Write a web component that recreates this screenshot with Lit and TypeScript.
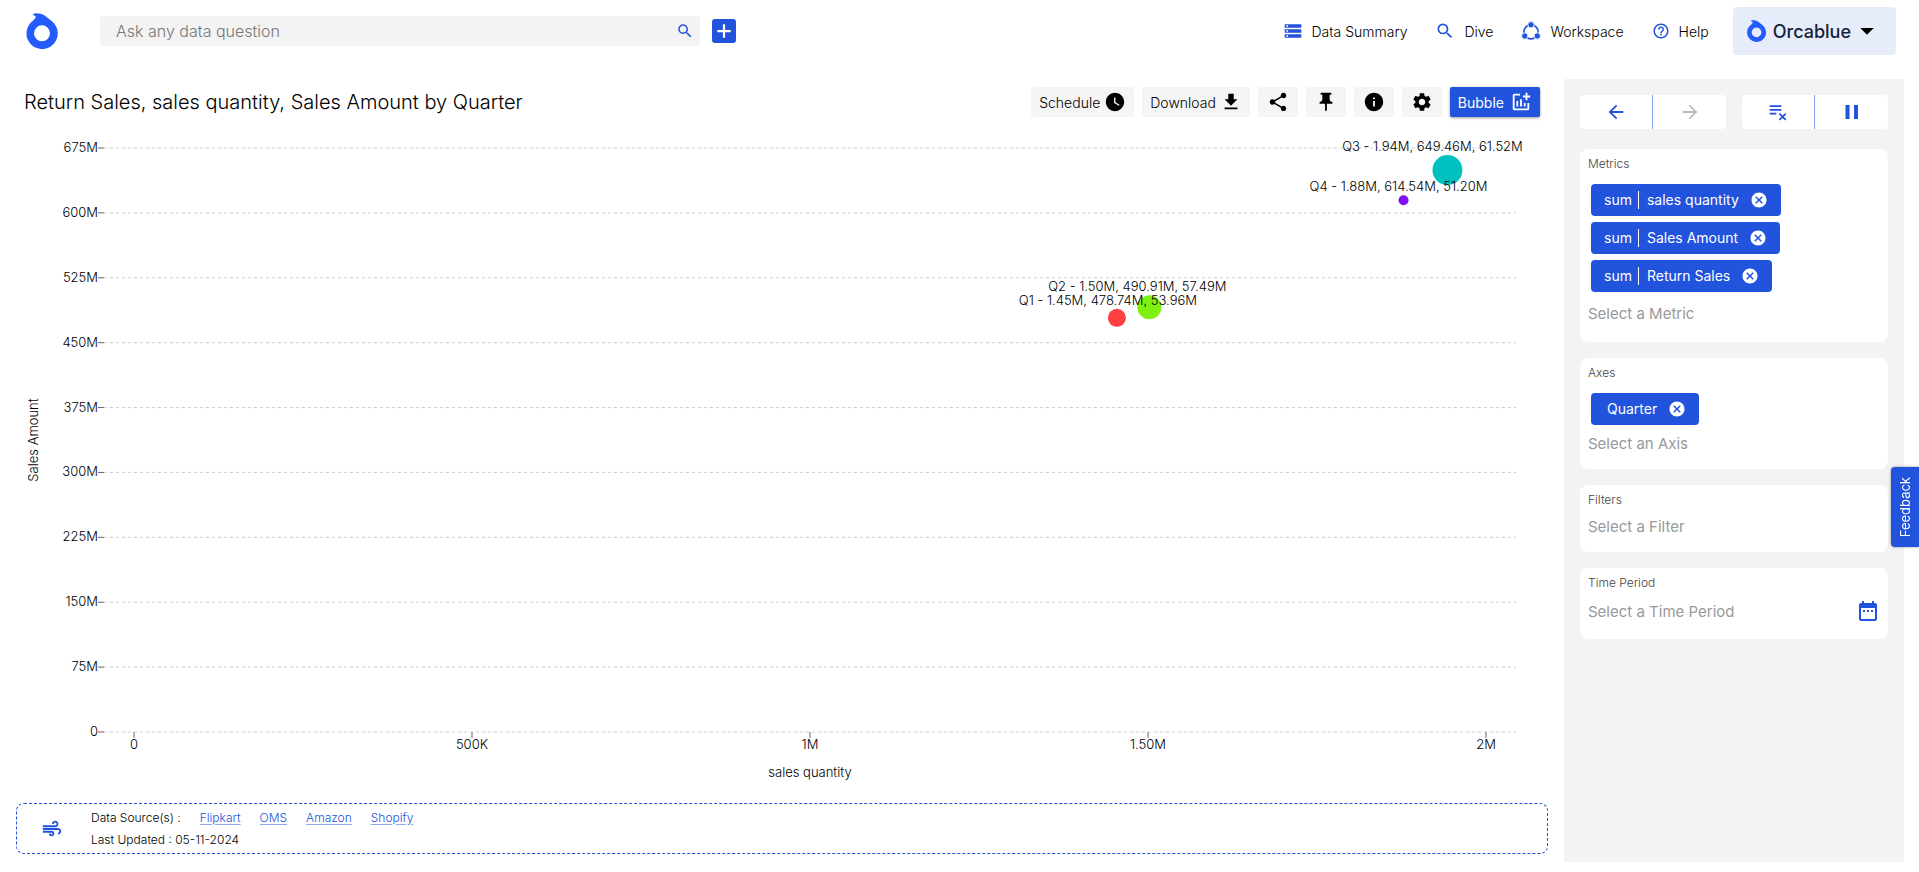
import { LitElement, html, svg, css, nothing } from "lit";
import { customElement, property, state } from "lit/decorators.js";

const ICONS: Record<string, string> = {
  search:
    "M15.5 14h-.79l-.28-.27A6.471 6.471 0 0 0 16 9.5 6.5 6.5 0 1 0 9.5 16c1.61 0 3.09-.59 4.23-1.57l.27.28v.79l5 4.99L20.49 19l-4.99-5zm-6 0C7.01 14 5 11.99 5 9.5S7.01 5 9.5 5 14 7.01 14 9.5 11.99 14 9.5 14z",
  plus: "M21 13.5h-7.5V21h-3v-7.5H3v-3h7.5V3h3v7.500H21z",
  storage:
    "M2 20h20v-4H2v4zm2-3h2v2H4v-2zM2 4v4h20V4H2zm4 3H4V5h2v2zm-4 7h20v-4H2v4zm2-3h2v2H4v-2z",
  help: "M11 18h2v-2h-2v2zm1-16C6.480 2 2 6.480 2 12s4.480 10 10 10 10-4.480 10-10S17.520 2 12 2zm0 18c-4.410 0-8-3.590-8-8s3.590-8 8-8 8 3.590 8 8-3.590 8-8 8zm0-14c-2.210 0-4 1.790-4 4h2c0-1.100.9-2 2-2s2 .9 2 2c0 2-3 1.750-3 5h2c0-2.250 3-2.500 3-5 0-2.210-1.790-4-4-4z",
  clock:
    "M12 2C6.5 2 2 6.5 2 12s4.5 10 10 10 10-4.5 10-10S17.5 2 12 2zm4.200 14.200L11 13V7h1.500v5.200l4.500 2.700-.8 1.300z",
  download: "M19 9h-4V3H9v6H5l7 7 7-7zM5 18v2h14v-2H5z",
  share:
    "M18 16.080c-.76 0-1.440.3-1.960.77L8.910 12.700c.05-.23.09-.46.09-.7s-.04-.47-.09-.7l7.050-4.110c.54.5 1.250.81 2.040.81 1.660 0 3-1.340 3-3s-1.340-3-3-3-3 1.340-3 3c0 .24.04.47.09.7L8.040 9.810C7.500 9.310 6.790 9 6 9c-1.660 0-3 1.340-3 3s1.340 3 3 3c.79 0 1.500-.31 2.040-.81l7.120 4.160c-.05.21-.08.43-.08.65 0 1.610 1.310 2.920 2.920 2.920s2.920-1.310 2.920-2.920-1.310-2.920-2.920-2.920z",
  pin: "M16 9V4h1c.55 0 1-.45 1-1s-.45-1-1-1H7c-.55 0-1 .45-1 1s.45 1 1 1h1v5c0 1.660-1.340 3-3 3v2h5.970v7l1 1 1-1v-7H19v-2c-1.660 0-3-1.340-3-3z",
  info: "M12 2C6.480 2 2 6.480 2 12s4.480 10 10 10 10-4.480 10-10S17.520 2 12 2zm1 15h-2v-6h2v6zm0-8h-2V7h2v2z",
  settings:
    "M19.14 12.94c.04-.3.06-.61.06-.94 0-.32-.02-.64-.07-.94l2.03-1.58a.49.49 0 0 0 .12-.61l-1.92-3.32a.488.488 0 0 0-.59-.22l-2.39.96c-.5-.38-1.03-.7-1.62-.94l-.36-2.54a.484.484 0 0 0-.48-.41h-3.84c-.24 0-.43.17-.47.41l-.36 2.54c-.59.24-1.13.57-1.62.94l-2.39-.96c-.22-.08-.47 0-.59.22L2.74 8.87c-.12.21-.08.47.12.61l2.03 1.58c-.05.3-.09.63-.09.94s.02.64.07.94l-2.03 1.58a.49.49 0 0 0-.12.61l1.92 3.32c.12.22.37.29.59.22l2.39-.96c.5.38 1.03.7 1.62.94l.36 2.54c.05.24.24.41.48.41h3.84c.24 0 .44-.17.47-.41l.36-2.54c.59-.24 1.13-.56 1.62-.94l2.39.96c.22.08.47 0 .59-.22l1.92-3.32c.12-.22.07-.47-.12-.61l-2.01-1.58zM12 15.6c-1.98 0-3.6-1.62-3.6-3.6s1.62-3.6 3.6-3.6 3.6 1.62 3.6 3.6-1.62 3.6-3.6 3.6z",
  addchart:
    "M22 5v2h-3v3h-2V7h-3V5h3V2h2v3h3zm-3 14H5V5h6V3H5c-1.100 0-2 .9-2 2v14c0 1.100.9 2 2 2h14c1.100 0 2-.9 2-2v-6h-2v6zm-4-6v4h2v-4h-2zm-4 4h2V9h-2v8zm-2 0v-6H7v6h2z",
  back: "M20 11H7.830l5.590-5.590L12 4l-8 8 8 8 1.410-1.410L7.830 13H20v-2z",
  forward: "M12 4l-1.410 1.410L16.170 11H4v2h12.170l-5.580 5.590L12 20l8-8z",
  clear:
    "M2 4h14v2H2zM2 8.500h14v2H2zM2 13h8v2H2zM14.400 13.200l3.100 3.100 3.100-3.100 1.400 1.400-3.100 3.100 3.100 3.100-1.400 1.400-3.100-3.100-3.100 3.100-1.400-1.400 3.100-3.100-3.100-3.100z",
  pause: "M5.500 19h4V5h-4v14zm8.500-14v14h4V5h-4z",
  cancel:
    "M12 2C6.470 2 2 6.470 2 12s4.470 10 10 10 10-4.470 10-10S17.530 2 12 2zm5 13.590L15.590 17 12 13.410 8.410 17 7 15.590 10.590 12 7 8.410 8.410 7 12 10.590 15.590 7 17 8.410 13.410 12 17 15.590z",
  calendar:
    "M19 4h-1V2h-2v2H8V2H6v2H5c-1.110 0-1.990.9-1.990 2L3 20a2 2 0 0 0 2 2h14c1.100 0 2-.9 2-2V6c0-1.100-.9-2-2-2zm0 16H5V9h14v11zM7 11h2v2H7zM11 11h2v2h-2zM15 11h2v2h-2z",
  air: "M14.500 17c0 1.650-1.350 3-3 3s-3-1.350-3-3h2c0 .55.45 1 1 1s1-.45 1-1-.45-1-1-1H2v-2h9.500c1.650 0 3 1.350 3 3zM19 6.500C19 4.570 17.430 3 15.500 3S12 4.570 12 6.500h2c0-.83.67-1.500 1.500-1.500s1.500.67 1.500 1.500S16.330 8 15.500 8H2v2h13.500c1.930 0 3.500-1.570 3.500-3.500zm-.5 4.500H2v2h16.500c.83 0 1.500.67 1.500 1.500s-.67 1.500-1.500 1.500v2c1.930 0 3.500-1.570 3.500-3.500S20.430 11 18.500 11z",
  caret: "M3 8h18l-9 9z",
};

const icon = (name: string, size = 20) => html`
  <svg viewBox="0 0 24 24" width=${size} height=${size} fill="currentColor" aria-hidden="true">
    <path d=${ICONS[name]}></path>
  </svg>
`;

const workspaceIcon = html`
  <svg viewBox="0 0 24 24" width="20" height="20" fill="currentColor" aria-hidden="true">
    <circle cx="12" cy="13" r="8.500" fill="none" stroke="currentColor" stroke-width="2"></circle>
    <g stroke="#fff" stroke-width="1">
      <circle cx="12" cy="4.500" r="3.800"></circle>
      <circle cx="4.500" cy="18" r="3.800"></circle>
      <circle cx="19.500" cy="18" r="3.800"></circle>
    </g>
  </svg>
`;

const orcaLogo = (width: number, height: number) => html`
  <svg viewBox="0 0 94 108" width=${width} height=${height} aria-hidden="true">
    <path
      fill="#235bff"
      fill-rule="evenodd"
      d="M19 3C28-1 43 0 54 7L76 24A47 47 0 1 1 15 27C24 20 31 13 27 9C24 6 20 8 19 3ZM47 37A24 24 0 1 0 47 85A24 24 0 1 0 47 37Z"
    ></path>
  </svg>
`;

const BASE = css`
  :host {
    box-sizing: border-box;
    font-family: Inter, "Open Sans", sans-serif;
  }
  * {
    box-sizing: border-box;
  }
  svg {
    display: block;
    flex: none;
  }
  button,
  input {
    font: inherit;
    color: inherit;
    border: 0;
    padding: 0;
    background: none;
  }
  button {
    cursor: pointer;
  }
  input {
    outline: none;
  }
`;

interface Bubble {
  name: string;
  quantity: number;
  amount: number;
  label: string;
  radius: number;
  color: string;
}

const BUBBLES: Bubble[] = [
  { name: "Q1", quantity: 1.454, amount: 478.74, label: "Q1 - 1.45M, 478.74M, 53.96M", radius: 9, color: "#ff4040" },
  { name: "Q2", quantity: 1.502, amount: 490.91, label: "Q2 - 1.50M, 490.91M, 57.49M", radius: 12, color: "#80f010" },
  { name: "Q3", quantity: 1.943, amount: 649.46, label: "Q3 - 1.94M, 649.46M, 61.52M", radius: 15, color: "#00c0c0" },
  { name: "Q4", quantity: 1.878, amount: 614.54, label: "Q4 - 1.88M, 614.54M, 51.20M", radius: 5, color: "#8010f0" },
];

const X_TICKS = [
  { value: 0, label: "0" },
  { value: 0.5, label: "500K" },
  { value: 1, label: "1M" },
  { value: 1.5, label: "1.50M" },
  { value: 2, label: "2M" },
];
const Y_TICKS = [0, 75, 150, 225, 300, 375, 450, 525, 600, 675];

@customElement("bubble-chart")
class BubbleChart extends LitElement {
  static styles = [
    BASE,
    css`
      :host {
        display: block;
        position: relative;
        overflow: hidden;
      }
      .plot {
        position: absolute;
        inset: 0;
        width: 100%;
        height: 100%;
      }
      .plot text {
        font-size: 13px;
        font-weight: 300;
        fill: #000;
      }
      .grid {
        stroke: #ccc;
        stroke-dasharray: 3 3;
      }
      .tick {
        stroke: #666;
      }
    `,
  ];

  @state() private w = 0;
  @state() private h = 0;
  private observer?: ResizeObserver;

  connectedCallback() {
    super.connectedCallback();
    this.observer = new ResizeObserver(() => this.measure());
    this.observer.observe(this);
  }

  disconnectedCallback() {
    super.disconnectedCallback();
    this.observer?.disconnect();
  }

  private measure() {
    this.w = this.clientWidth;
    this.h = this.clientHeight;
  }

  render() {
    if (!this.w || !this.h) return nothing;
    const left = 88;
    const right = this.w - 32;
    const top = 18;
    const bottom = this.h - 61;
    const inset = 30;
    const x = (v: number) => left + inset + (v / 2) * (right - left - inset * 2);
    const y = (v: number) => bottom - (v / 675) * (bottom - top);
    const midY = (top + bottom) / 2;
    return html`
      <svg class="plot" role="img" aria-label="Sales Amount by sales quantity for each quarter">
        ${Y_TICKS.map(
          (v) => svg`
            <line class="grid" x1=${left} x2=${right} y1=${y(v)} y2=${y(v)}></line>
            <line class="tick" x1=${left - 6} x2=${left} y1=${y(v)} y2=${y(v)}></line>
            <text x=${left - 6} y=${y(v) + 4} text-anchor="end">${v ? `${v}M` : "0"}</text>`
        )}
        ${X_TICKS.map(
          (t) => svg`
            <line class="tick" x1=${x(t.value)} x2=${x(t.value)} y1=${bottom} y2=${bottom + 6}></line>
            <text x=${x(t.value)} y=${bottom + 17} text-anchor="middle">${t.label}</text>`
        )}
        <text x=${x(1)} y=${bottom + 45} text-anchor="middle">sales quantity</text>
        <text transform="translate(22 ${midY}) rotate(-90)" text-anchor="middle">Sales Amount</text>
        ${BUBBLES.map(
          (b) => svg`<circle cx=${x(b.quantity)} cy=${y(b.amount)} r=${b.radius} fill=${b.color}></circle>`
        )}
        ${BUBBLES.map(
          (b) => svg`
            <text x=${x(b.quantity) - b.radius} y=${y(b.amount) - b.radius - 4} text-anchor="middle">${b.label}</text>`
        )}
      </svg>
    `;
  }
}

@customElement("query-card")
class QueryCard extends LitElement {
  @property() label = "";
  @property() placeholder = "";
  @property({ attribute: false }) chips: { fn?: string; name: string }[] = [];
  @property({ type: Boolean }) calendar = false;

  static styles = [
    BASE,
    css`
      :host {
        display: block;
        background: #fff;
        border-radius: 8px;
        padding: 7px 8px 8px;
      }
      .label {
        display: block;
        font-size: 12px;
        font-weight: 300;
        line-height: 16px;
        color: #444;
      }
      .chips {
        display: flex;
        flex-direction: column;
        align-items: flex-start;
        gap: 6px;
        padding: 12px 3px 0;
      }
      .chip {
        display: flex;
        align-items: center;
        height: 32px;
        padding: 0 13px;
        border-radius: 4px;
        background: #2153dc;
        color: #fff;
        font-size: 14px;
        line-height: 18px;
      }
      .plain {
        padding-left: 16px;
      }
      .fn {
        padding-right: 6px;
        margin-right: 8px;
        border-right: 1px solid #fff;
      }
      .remove {
        margin-left: 11px;
      }
      .entry {
        display: flex;
        align-items: center;
        min-height: 36px;
      }
      .dated {
        min-height: 40px;
      }
      .stacked {
        min-height: 42px;
      }
      .field {
        flex: 1;
        min-width: 0;
        height: 24px;
        font-size: 15px;
      }
      .field::placeholder {
        color: #999;
        opacity: 1;
      }
      .date {
        color: #2153dc;
      }
    `,
  ];

  render() {
    const size = this.calendar ? "dated" : this.chips.length > 1 ? "stacked" : "";
    return html`
      <label class="label" for="field">${this.label}</label>
      ${this.chips.length
        ? html`<div class="chips">
            ${this.chips.map(
              (c) => html`<div class="chip ${c.fn ? "" : "plain"}">
                ${c.fn ? html`<span class="fn">${c.fn}</span>` : nothing}
                <span>${c.name}</span>
                <button class="remove" aria-label="Remove ${c.name}">${icon("cancel", 18)}</button>
              </div>`
            )}
          </div>`
        : nothing}
      <div class="entry ${size}">
        <input id="field" class="field" placeholder=${this.placeholder} />
        ${this.calendar
          ? html`<button class="date" aria-label="Open calendar">${icon("calendar", 24)}</button>`
          : nothing}
      </div>
    `;
  }
}

@customElement("app-root")
class AppRoot extends LitElement {
  static styles = [
    BASE,
    css`
      :host {
        display: flex;
        flex-direction: column;
        min-height: 100vh;
        padding-bottom: 10px;
        background: #fff;
        color: #000;
      }
      .header {
        display: flex;
        align-items: center;
        height: 62px;
        padding: 0 23px 0 26px;
      }
      .search {
        display: flex;
        align-items: center;
        flex: 0 1 600px;
        height: 30px;
        margin: 0 12px 0 42px;
        padding: 0 6px 0 16px;
        border-radius: 4px;
        background: #f3f3f3;
      }
      .query {
        flex: 1;
        min-width: 0;
        font-size: 16px;
        font-weight: 300;
      }
      .query::placeholder {
        color: #777;
        opacity: 1;
      }
      .blue {
        color: #2153dc;
      }
      .add {
        display: grid;
        place-items: center;
        width: 24px;
        height: 24px;
        border-radius: 3px;
        background: #2153dc;
        color: #fff;
      }
      .nav {
        display: flex;
        align-items: center;
        gap: 28px;
        margin-left: auto;
        font-size: 14px;
        font-weight: 300;
      }
      .navlink {
        display: flex;
        align-items: center;
        gap: 9px;
        color: #000;
        text-decoration: none;
      }
      .navlink svg {
        color: #2153dc;
      }
      .account {
        display: flex;
        align-items: center;
        gap: 7px;
        height: 48px;
        margin-left: 24px;
        padding: 0 20px 0 14px;
        border-radius: 4px;
        background: #e7ecfa;
        color: #14233c;
        font-size: 18px;
        font-weight: 500;
      }
      .caret {
        color: #000;
      }
      .body {
        flex: 1;
        display: grid;
        grid-template-columns: minmax(0, 1fr) 340px;
        padding: 17px 15px 0 0;
      }
      .main {
        display: flex;
        flex-direction: column;
        padding: 8px 16px;
      }
      .titlebar {
        display: flex;
        align-items: center;
        justify-content: space-between;
        padding: 0 8px;
        min-height: 30px;
      }
      .title {
        margin: 0;
        font-size: 20px;
        font-weight: 300;
        line-height: 24px;
      }
      .tools {
        display: flex;
        gap: 8px;
      }
      .tool {
        display: flex;
        align-items: center;
        justify-content: center;
        gap: 4px;
        min-width: 40px;
        height: 30px;
        padding: 0 8px;
        border-radius: 2px;
        background: #f5f5f5;
        font-size: 14px;
        font-weight: 300;
      }
      .primary {
        gap: 6px;
        background: #2153dc;
        color: #fff;
        font-weight: 400;
        box-shadow: 0 1px 3px rgba(0, 0, 0, 0.4);
      }
      .chart {
        flex: 1;
        min-height: 400px;
        margin: 13px 0 10px;
      }
      .sources {
        display: flex;
        align-items: center;
        gap: 28px;
        min-height: 51px;
        padding: 0 24px;
        border: 1px dashed #2153dc;
        border-radius: 8px;
        font-size: 12px;
        font-weight: 300;
        line-height: 22px;
      }
      .row {
        display: flex;
        gap: 19px;
      }
      .source {
        color: #2153dc;
        text-decoration-color: #90a9ee;
        text-underline-offset: 2px;
      }
      .side {
        display: flex;
        flex-direction: column;
        gap: 16px;
        padding: 16px;
        background: #f3f3f3;
      }
      .groups {
        display: grid;
        grid-template-columns: 1fr 1fr;
        gap: 16px;
        margin-bottom: 4px;
      }
      .group {
        display: grid;
        grid-template-columns: 1fr 1fr;
        height: 34px;
        border-radius: 4px;
        background: #fff;
      }
      .step {
        display: grid;
        place-items: center;
        color: #2153dc;
      }
      .step:first-child {
        border-right: 1px solid #86a2ec;
      }
      .off {
        color: #bbb;
      }
      .feedback {
        position: fixed;
        right: 0;
        top: 467px;
        width: 28px;
        height: 80px;
        border-radius: 4px 0 0 4px;
        background: #2153dc;
        color: #fff;
        font-size: 13px;
        writing-mode: vertical-rl;
        text-align: center;
        box-shadow: 0 0 3px rgba(0, 0, 0, 0.4);
      }
      .turn {
        display: inline-block;
        transform: rotate(180deg);
      }
    `,
  ];

  private metrics = [
    { fn: "sum", name: "sales quantity" },
    { fn: "sum", name: "Sales Amount" },
    { fn: "sum", name: "Return Sales" },
  ];
  private axes = [{ name: "Quarter" }];
  private sources = ["Flipkart", "OMS", "Amazon", "Shopify"];

  render() {
    return html`
      <header class="header">
        ${orcaLogo(32, 36)}
        <form class="search" role="search">
          <input class="query" aria-label="Ask any data question" placeholder="Ask any data question" />
          <button class="blue" type="button" aria-label="Search">${icon("search", 18)}</button>
        </form>
        <button class="add" aria-label="Add">${icon("plus", 18)}</button>
        <nav class="nav">
          <a class="navlink" href="#summary">${icon("storage")}Data Summary</a>
          <a class="navlink" href="#dive">${icon("search")}Dive</a>
          <a class="navlink" href="#workspace">${workspaceIcon}Workspace</a>
          <a class="navlink" href="#help">${icon("help", 18)}Help</a>
        </nav>
        <button class="account">
          ${orcaLogo(19, 22)}<span>Orcablue</span><span class="caret">${icon("caret", 18)}</span>
        </button>
      </header>
      <div class="body">
        <main class="main">
          <div class="titlebar">
            <h1 class="title">Return Sales, sales quantity, Sales Amount by Quarter</h1>
            <div class="tools">
              <button class="tool">Schedule ${icon("clock", 22)}</button>
              <button class="tool">Download ${icon("download", 22)}</button>
              <button class="tool" aria-label="Share">${icon("share", 22)}</button>
              <button class="tool" aria-label="Pin">${icon("pin", 22)}</button>
              <button class="tool" aria-label="Information">${icon("info", 22)}</button>
              <button class="tool" aria-label="Settings">${icon("settings", 22)}</button>
              <button class="tool primary">Bubble ${icon("addchart", 22)}</button>
            </div>
          </div>
          <bubble-chart class="chart"></bubble-chart>
          <footer class="sources">
            <span class="blue">${icon("air", 22)}</span>
            <div>
              <div class="row">
                <span>Data Source(s) :</span>
                ${this.sources.map((s) => html`<a class="source" href="#${s.toLowerCase()}">${s}</a>`)}
              </div>
              <div>Last Updated : 05-11-2024</div>
            </div>
          </footer>
        </main>
        <aside class="side">
          <div class="groups">
            <div class="group">
              <button class="step" aria-label="Back">${icon("back", 22)}</button>
              <button class="step off" aria-label="Forward">${icon("forward", 22)}</button>
            </div>
            <div class="group">
              <button class="step" aria-label="Clear all">${icon("clear", 20)}</button>
              <button class="step" aria-label="Pause">${icon("pause", 24)}</button>
            </div>
          </div>
          <query-card label="Metrics" placeholder="Select a Metric" .chips=${this.metrics}></query-card>
          <query-card label="Axes" placeholder="Select an Axis" .chips=${this.axes}></query-card>
          <query-card label="Filters" placeholder="Select a Filter"></query-card>
          <query-card label="Time Period" placeholder="Select a Time Period" calendar></query-card>
        </aside>
      </div>
      <button class="feedback"><span class="turn">Feedback</span></button>
    `;
  }
}
